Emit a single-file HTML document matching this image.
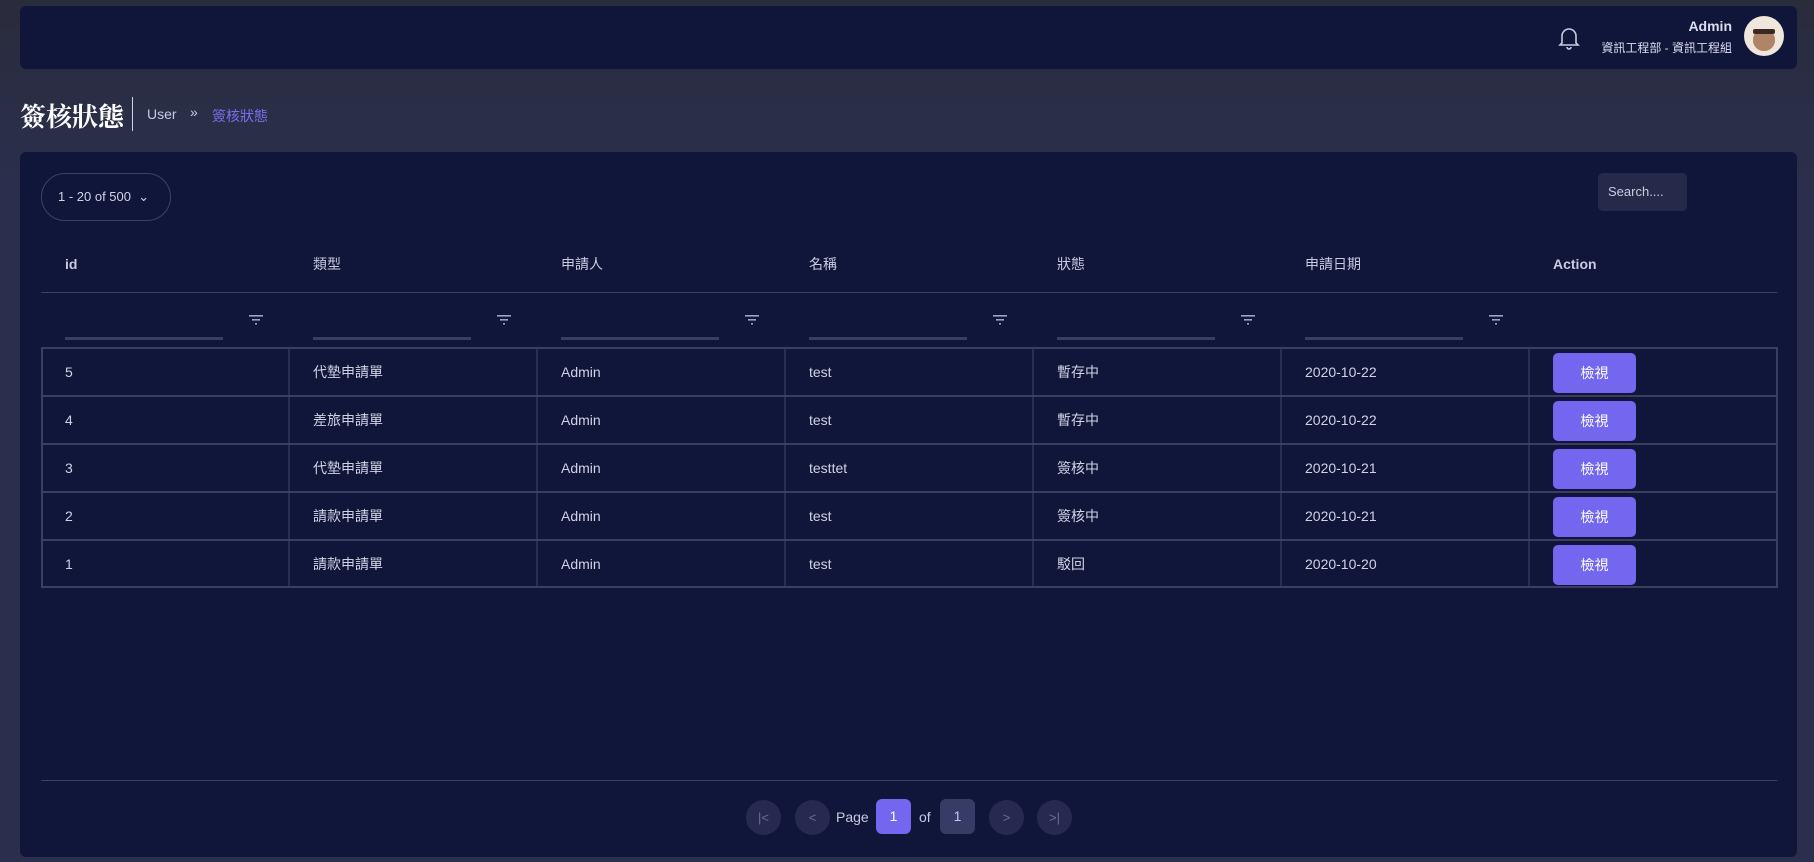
<!DOCTYPE html>
<html><head><meta charset="utf-8"><style>
*{box-sizing:border-box;margin:0;padding:0}
body{width:1814px;height:862px;overflow:hidden;background:linear-gradient(#2a2c3c,#2b2f4e 200px,#2b2f4e);font-family:"Liberation Sans","Noto Sans CJK TC",sans-serif;color:#d0d2e6;position:relative}
.abs{position:absolute;white-space:nowrap}
.hdr{left:20px;top:6px;width:1777px;height:63px;background:#10163a;border-radius:6px}
.card{left:20px;top:152px;width:1777px;height:705px;background:#10163a;border-radius:6px}
.th{top:256px;font-size:14px;color:#c8cbe0;line-height:16px}
.cell{font-size:14px;color:#d0d2e6;line-height:16px}
.btn{width:83px;height:40px;background:#7367f0;border-radius:5px;color:#fff;font-size:14px;text-align:center;line-height:40px}
.circ{width:35px;height:35px;border-radius:50%;background:#262a50;color:#6b6f93;text-align:center;line-height:35px;font-size:13px;top:800px}
</style></head><body>
<div class="abs hdr"></div>
<svg class="abs" style="left:1558px;top:26px" width="22" height="24" viewBox="0 0 22 24"><path d="M4 17V10a7 7 0 0 1 14 0v7l2 2H2z M9 21a2 2 0 0 0 4 0" fill="none" stroke="#c8cbe0" stroke-width="1.6"/></svg>
<div class="abs" style="right:82px;top:18px;font-size:14px;font-weight:bold;color:#dcdef0">Admin</div>
<div class="abs" style="right:82px;top:39px;font-size:12px;color:#dcdef0">資訊工程部 - 資訊工程組</div>
<div class="abs" style="left:1744px;top:16px;width:40px;height:40px;border-radius:50%;background:radial-gradient(circle at 50% 60%,#b08468 0 35%,#efe6dc 36%)"><div style="position:absolute;left:9px;top:13px;width:22px;height:5px;background:#3a2a22;border-radius:2px"></div></div>

<div class="abs" style="left:20px;top:97px;font-size:26px;color:#fff;font-family:'Noto Serif CJK SC',serif;font-weight:bold">簽核狀態</div>
<div class="abs" style="left:132px;top:97px;width:1px;height:34px;background:#cfd2e6"></div>
<div class="abs" style="left:147px;top:106px;font-size:14px;color:#c8cbe0">User</div>
<div class="abs" style="left:190px;top:104px;font-size:14px;color:#c8cbe0">»</div>
<div class="abs" style="left:212px;top:106px;font-size:14px;color:#7b6ff0">簽核狀態</div>

<div class="abs card"></div>
<div class="abs" style="left:41px;top:173px;width:130px;height:48px;border:1px solid #3c416a;border-radius:24px;font-size:13px;line-height:46px;padding-left:16px;color:#d0d2e6">1 - 20 of 500 &nbsp;⌄</div>
<div class="abs" style="left:1598px;top:173px;width:89px;height:38px;background:#262a4a;border-radius:5px;font-size:13px;line-height:38px;padding-left:10px;color:#c8cbe0">Search....</div>

<div class="abs th" style="left:65px;font-weight:bold">id</div>
<div class="abs th" style="left:313px">類型</div>
<div class="abs th" style="left:561px">申請人</div>
<div class="abs th" style="left:809px">名稱</div>
<div class="abs th" style="left:1057px">狀態</div>
<div class="abs th" style="left:1305px">申請日期</div>
<div class="abs th" style="left:1553px;font-weight:bold">Action</div>
<div class="abs" style="left:41px;top:292px;width:1736px;height:1px;background:#3c416a"></div>

<svg class="abs" style="left:0;top:0" width="1814" height="862">
<defs><g id="fi"><rect x="0" y="0" width="14" height="1.6" fill="#9ea2c4"/><rect x="3" y="4" width="8" height="1.6" fill="#9ea2c4"/><rect x="6" y="8" width="2" height="1.6" fill="#9ea2c4"/></g></defs>
<use href="#fi" x="249" y="315"/><use href="#fi" x="497" y="315"/><use href="#fi" x="745" y="315"/><use href="#fi" x="993" y="315"/><use href="#fi" x="1241" y="315"/><use href="#fi" x="1489" y="315"/>
<g fill="#3a3f62">
<rect x="65" y="337" width="158" height="3"/><rect x="313" y="337" width="158" height="3"/><rect x="561" y="337" width="158" height="3"/><rect x="809" y="337" width="158" height="3"/><rect x="1057" y="337" width="158" height="3"/><rect x="1305" y="337" width="158" height="3"/>
</g>
<g fill="none" stroke="#3a3f62" stroke-width="2">
<rect x="42" y="348" width="1735" height="239"/>
<line x1="41" y1="396" x2="1777" y2="396"/><line x1="41" y1="444" x2="1777" y2="444"/><line x1="41" y1="492" x2="1777" y2="492"/><line x1="41" y1="540" x2="1777" y2="540"/>
</g>
<g stroke="#3a3f62" stroke-width="1.2">
<line x1="289" y1="348" x2="289" y2="587"/><line x1="537" y1="348" x2="537" y2="587"/><line x1="785" y1="348" x2="785" y2="587"/><line x1="1033" y1="348" x2="1033" y2="587"/><line x1="1281" y1="348" x2="1281" y2="587"/><line x1="1529" y1="348" x2="1529" y2="587"/>
</g>
<rect x="41" y="780" width="1736" height="1" fill="#3c416a"/>
</svg>

<div class="abs cell" style="left:65px;top:364px">5</div><div class="abs cell" style="left:65px;top:412px">4</div><div class="abs cell" style="left:65px;top:460px">3</div><div class="abs cell" style="left:65px;top:508px">2</div><div class="abs cell" style="left:65px;top:556px">1</div>
<div class="abs cell" style="left:313px;top:364px">代墊申請單</div><div class="abs cell" style="left:313px;top:412px">差旅申請單</div><div class="abs cell" style="left:313px;top:460px">代墊申請單</div><div class="abs cell" style="left:313px;top:508px">請款申請單</div><div class="abs cell" style="left:313px;top:556px">請款申請單</div>
<div class="abs cell" style="left:561px;top:364px">Admin</div><div class="abs cell" style="left:561px;top:412px">Admin</div><div class="abs cell" style="left:561px;top:460px">Admin</div><div class="abs cell" style="left:561px;top:508px">Admin</div><div class="abs cell" style="left:561px;top:556px">Admin</div>
<div class="abs cell" style="left:809px;top:364px">test</div><div class="abs cell" style="left:809px;top:412px">test</div><div class="abs cell" style="left:809px;top:460px">testtet</div><div class="abs cell" style="left:809px;top:508px">test</div><div class="abs cell" style="left:809px;top:556px">test</div>
<div class="abs cell" style="left:1057px;top:364px">暫存中</div><div class="abs cell" style="left:1057px;top:412px">暫存中</div><div class="abs cell" style="left:1057px;top:460px">簽核中</div><div class="abs cell" style="left:1057px;top:508px">簽核中</div><div class="abs cell" style="left:1057px;top:556px">駁回</div>
<div class="abs cell" style="left:1305px;top:364px">2020-10-22</div><div class="abs cell" style="left:1305px;top:412px">2020-10-22</div><div class="abs cell" style="left:1305px;top:460px">2020-10-21</div><div class="abs cell" style="left:1305px;top:508px">2020-10-21</div><div class="abs cell" style="left:1305px;top:556px">2020-10-20</div>
<div class="abs btn" style="left:1553px;top:353px">檢視</div><div class="abs btn" style="left:1553px;top:401px">檢視</div><div class="abs btn" style="left:1553px;top:449px">檢視</div><div class="abs btn" style="left:1553px;top:497px">檢視</div><div class="abs btn" style="left:1553px;top:545px">檢視</div>

<div class="abs circ" style="left:746px">|&lt;</div>
<div class="abs circ" style="left:795px">&lt;</div>
<div class="abs" style="left:836px;top:809px;font-size:14px;color:#c8cbe0">Page</div>
<div class="abs" style="left:876px;top:799px;width:35px;height:35px;border-radius:6px;background:#7367f0;color:#fff;text-align:center;line-height:35px;font-size:14px">1</div>
<div class="abs" style="left:919px;top:809px;font-size:14px;color:#c8cbe0">of</div>
<div class="abs" style="left:940px;top:799px;width:35px;height:35px;border-radius:6px;background:#373c66;color:#c8cbe0;text-align:center;line-height:35px;font-size:14px">1</div>
<div class="abs circ" style="left:989px">&gt;</div>
<div class="abs circ" style="left:1037px">&gt;|</div>
</body></html>
